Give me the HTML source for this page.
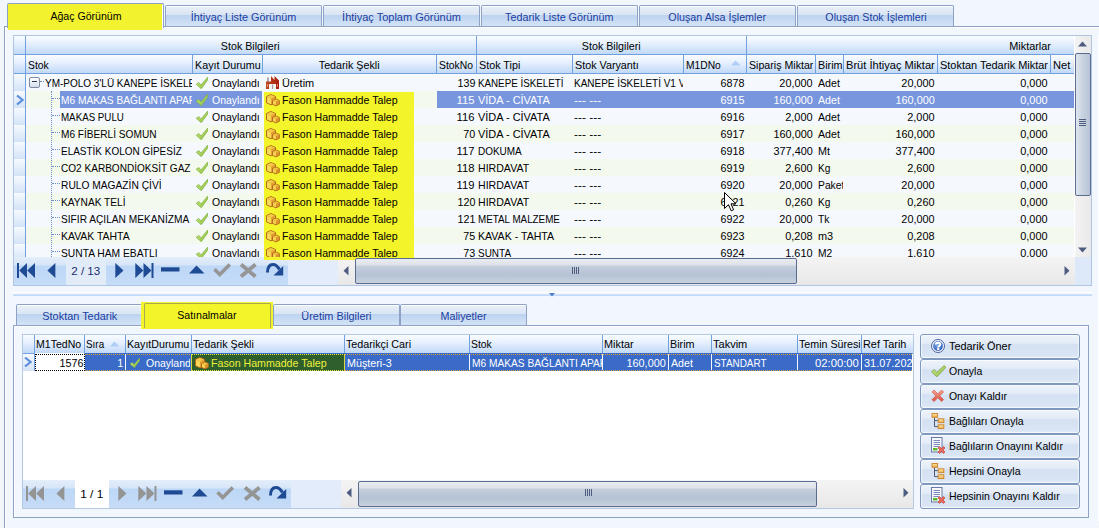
<!DOCTYPE html><html><head><meta charset="utf-8"><style>*{margin:0;padding:0}
html,body{width:1099px;height:528px;overflow:hidden}
body{position:relative;background:#F2F6FD;font-family:"Liberation Sans",sans-serif;font-size:11px}
div{position:absolute;box-sizing:content-box}
.t{white-space:pre;line-height:13px;height:13px}
svg{position:absolute}
</style></head><body>
<div style="left:4px;top:26px;width:1095px;height:502px;border-left:1px solid #8DA2C4;border-top:1px solid #8DA2C4;background:#F2F6FD"></div>
<div style="left:5px;top:27px;width:1094px;height:501px;border-left:1px solid #fff;border-top:1px solid #fff"></div>
<div style="left:165px;top:5px;width:155px;height:20px;border:1px solid #8DA2C4;border-bottom:none;border-radius:2px 2px 0 0;background:linear-gradient(#EAF0F8 0px,#D9E4F3 9px,#BCD2EF 9px,#C9DCF3 15px,#D3E3F6 20px);box-shadow:inset 0 1px 0 #fff"></div>
<div class="t" style="left:189.97px;top:11px;color:#1B3DA2;transform:scaleX(0.9857);transform-origin:50% 0;">İhtiyaç Liste Görünüm</div>
<div style="left:323px;top:5px;width:155px;height:20px;border:1px solid #8DA2C4;border-bottom:none;border-radius:2px 2px 0 0;background:linear-gradient(#EAF0F8 0px,#D9E4F3 9px,#BCD2EF 9px,#C9DCF3 15px,#D3E3F6 20px);box-shadow:inset 0 1px 0 #fff"></div>
<div class="t" style="left:341.96px;top:11px;color:#1B3DA2;transform:scaleX(0.9987);transform-origin:50% 0;">İhtiyaç Toplam Görünüm</div>
<div style="left:481px;top:5px;width:155px;height:20px;border:1px solid #8DA2C4;border-bottom:none;border-radius:2px 2px 0 0;background:linear-gradient(#EAF0F8 0px,#D9E4F3 9px,#BCD2EF 9px,#C9DCF3 15px,#D3E3F6 20px);box-shadow:inset 0 1px 0 #fff"></div>
<div class="t" style="left:504.14px;top:11px;color:#1B3DA2;transform:scaleX(0.9803);transform-origin:50% 0;">Tedarik Liste Görünüm</div>
<div style="left:639px;top:5px;width:155px;height:20px;border:1px solid #8DA2C4;border-bottom:none;border-radius:2px 2px 0 0;background:linear-gradient(#EAF0F8 0px,#D9E4F3 9px,#BCD2EF 9px,#C9DCF3 15px,#D3E3F6 20px);box-shadow:inset 0 1px 0 #fff"></div>
<div class="t" style="left:667.35px;top:11px;color:#1B3DA2;transform:scaleX(0.9737);transform-origin:50% 0;">Oluşan Alsa İşlemler</div>
<div style="left:797px;top:5px;width:155px;height:20px;border:1px solid #8DA2C4;border-bottom:none;border-radius:2px 2px 0 0;background:linear-gradient(#EAF0F8 0px,#D9E4F3 9px,#BCD2EF 9px,#C9DCF3 15px,#D3E3F6 20px);box-shadow:inset 0 1px 0 #fff"></div>
<div class="t" style="left:823.52px;top:11px;color:#1B3DA2;transform:scaleX(0.9749);transform-origin:50% 0;">Oluşan Stok İşlemleri</div>
<div style="left:7px;top:3px;width:155px;height:24px;border:1px solid #8DA2C4;border-bottom:none;border-radius:2px 2px 0 0;background:#F2F22E;box-shadow:inset -1px 0 0 #fff"></div>
<div style="left:8px;top:4px;width:154px;height:26px;background:#F2F22E"></div>
<div class="t" style="left:48.98px;top:10px;color:#000;transform:scaleX(0.9610);transform-origin:50% 0;">Ağaç Görünüm</div>
<div style="left:13px;top:35px;width:1077px;height:249px;border:1px solid #AFC5E2;background:#F5F9FE"></div>
<div style="left:14px;top:36px;width:11px;height:18px;background:linear-gradient(#FAFCFF,#E4EFFD 45%,#C1D9F8);border-right:1px solid #72A0DC;border-bottom:1px solid #72A0DC"></div>
<div style="left:14px;top:55px;width:11px;height:18px;background:linear-gradient(#FAFCFF,#E4EFFD 45%,#C1D9F8);border-right:1px solid #72A0DC;border-bottom:1px solid #72A0DC"></div>
<div style="left:26px;top:36px;width:450px;height:18px;background:linear-gradient(#FAFCFF,#E4EFFD 45%,#C1D9F8);border-bottom:1px solid #72A0DC"></div>
<div style="left:476px;top:36px;width:269px;height:18px;background:linear-gradient(#FAFCFF,#E4EFFD 45%,#C1D9F8);border-left:1px solid #72A0DC;border-bottom:1px solid #72A0DC"></div>
<div style="left:746px;top:36px;width:327px;height:18px;background:linear-gradient(#FAFCFF,#E4EFFD 45%,#C1D9F8);border-left:1px solid #72A0DC;border-bottom:1px solid #72A0DC"></div>
<div style="left:26px;top:55px;width:166px;height:18px;background:linear-gradient(#FAFCFF,#E4EFFD 45%,#C1D9F8);border-bottom:1px solid #72A0DC"></div>
<div style="left:192px;top:55px;width:69px;height:18px;background:linear-gradient(#FAFCFF,#E4EFFD 45%,#C1D9F8);border-bottom:1px solid #72A0DC;border-left:1px solid #72A0DC"></div>
<div style="left:262px;top:55px;width:173px;height:18px;background:linear-gradient(#FAFCFF,#E4EFFD 45%,#C1D9F8);border-bottom:1px solid #72A0DC;border-left:1px solid #72A0DC"></div>
<div style="left:436px;top:55px;width:39px;height:18px;background:linear-gradient(#FAFCFF,#E4EFFD 45%,#C1D9F8);border-bottom:1px solid #72A0DC;border-left:1px solid #72A0DC"></div>
<div style="left:476px;top:55px;width:95px;height:18px;background:linear-gradient(#FAFCFF,#E4EFFD 45%,#C1D9F8);border-bottom:1px solid #72A0DC;border-left:1px solid #72A0DC"></div>
<div style="left:572px;top:55px;width:110px;height:18px;background:linear-gradient(#FAFCFF,#E4EFFD 45%,#C1D9F8);border-bottom:1px solid #72A0DC;border-left:1px solid #72A0DC"></div>
<div style="left:683px;top:55px;width:62px;height:18px;background:linear-gradient(#FAFCFF,#E4EFFD 45%,#C1D9F8);border-bottom:1px solid #72A0DC;border-left:1px solid #72A0DC"></div>
<div style="left:746px;top:55px;width:68px;height:18px;background:linear-gradient(#FAFCFF,#E4EFFD 45%,#C1D9F8);border-bottom:1px solid #72A0DC;border-left:1px solid #72A0DC"></div>
<div style="left:815px;top:55px;width:27px;height:18px;background:linear-gradient(#FAFCFF,#E4EFFD 45%,#C1D9F8);border-bottom:1px solid #72A0DC;border-left:1px solid #72A0DC"></div>
<div style="left:843px;top:55px;width:93px;height:18px;background:linear-gradient(#FAFCFF,#E4EFFD 45%,#C1D9F8);border-bottom:1px solid #72A0DC;border-left:1px solid #72A0DC"></div>
<div style="left:937px;top:55px;width:112px;height:18px;background:linear-gradient(#FAFCFF,#E4EFFD 45%,#C1D9F8);border-bottom:1px solid #72A0DC;border-left:1px solid #72A0DC"></div>
<div style="left:1050px;top:55px;width:23px;height:18px;background:linear-gradient(#FAFCFF,#E4EFFD 45%,#C1D9F8);border-bottom:1px solid #72A0DC;border-left:1px solid #72A0DC"></div>
<div style="left:26px;top:74px;width:1048px;height:17px;background:#F5F9FE"></div>
<div style="left:14px;top:74px;width:11px;height:17px;background:linear-gradient(#F7FAFE,#D3E3F7 17px);border-right:1px solid #72A0DC"></div>
<div style="left:26px;top:91px;width:1048px;height:17px;background:#F4F9EE"></div>
<div style="left:14px;top:91px;width:11px;height:17px;background:linear-gradient(#F7FAFE,#D3E3F7 17px);border-right:1px solid #72A0DC"></div>
<div style="left:26px;top:108px;width:1048px;height:17px;background:#F5F9FE"></div>
<div style="left:14px;top:108px;width:11px;height:17px;background:linear-gradient(#F7FAFE,#D3E3F7 17px);border-right:1px solid #72A0DC"></div>
<div style="left:26px;top:125px;width:1048px;height:17px;background:#F4F9EE"></div>
<div style="left:14px;top:125px;width:11px;height:17px;background:linear-gradient(#F7FAFE,#D3E3F7 17px);border-right:1px solid #72A0DC"></div>
<div style="left:26px;top:142px;width:1048px;height:17px;background:#F5F9FE"></div>
<div style="left:14px;top:142px;width:11px;height:17px;background:linear-gradient(#F7FAFE,#D3E3F7 17px);border-right:1px solid #72A0DC"></div>
<div style="left:26px;top:159px;width:1048px;height:17px;background:#F4F9EE"></div>
<div style="left:14px;top:159px;width:11px;height:17px;background:linear-gradient(#F7FAFE,#D3E3F7 17px);border-right:1px solid #72A0DC"></div>
<div style="left:26px;top:176px;width:1048px;height:17px;background:#F5F9FE"></div>
<div style="left:14px;top:176px;width:11px;height:17px;background:linear-gradient(#F7FAFE,#D3E3F7 17px);border-right:1px solid #72A0DC"></div>
<div style="left:26px;top:193px;width:1048px;height:17px;background:#F4F9EE"></div>
<div style="left:14px;top:193px;width:11px;height:17px;background:linear-gradient(#F7FAFE,#D3E3F7 17px);border-right:1px solid #72A0DC"></div>
<div style="left:26px;top:210px;width:1048px;height:17px;background:#F5F9FE"></div>
<div style="left:14px;top:210px;width:11px;height:17px;background:linear-gradient(#F7FAFE,#D3E3F7 17px);border-right:1px solid #72A0DC"></div>
<div style="left:26px;top:227px;width:1048px;height:17px;background:#F4F9EE"></div>
<div style="left:14px;top:227px;width:11px;height:17px;background:linear-gradient(#F7FAFE,#D3E3F7 17px);border-right:1px solid #72A0DC"></div>
<div style="left:26px;top:244px;width:1048px;height:13px;background:#F5F9FE"></div>
<div style="left:14px;top:244px;width:11px;height:13px;background:linear-gradient(#F7FAFE,#D3E3F7 17px);border-right:1px solid #72A0DC"></div>
<div class="t" style="left:219.73px;top:40px;color:#000;transform:scaleX(0.9720);transform-origin:50% 0;">Stok Bilgileri</div>
<div class="t" style="left:580.73px;top:40px;color:#000;transform:scaleX(0.9720);transform-origin:50% 0;">Stok Bilgileri</div>
<div class="t" style="left:1008.92px;top:40px;color:#000;transform:scaleX(0.9911);transform-origin:50% 0;">Miktarlar</div>
<div style="left:26px;top:55px;width:1048px;height:18px;overflow:hidden;">
<div class="t" style="left:2px;top:4px;color:#000;transform:scaleX(0.9452);transform-origin:0 0;">Stok</div>
<div class="t" style="left:169px;top:4px;color:#000;transform:scaleX(0.9767);transform-origin:0 0;">Kayıt Durumu</div>
<div class="t" style="left:291.81px;top:4px;color:#000;transform:scaleX(0.9744);transform-origin:50% 0;">Tedarik Şekli</div>
<div class="t" style="left:413px;top:4px;color:#000;transform:scaleX(0.9412);transform-origin:0 0;">StokNo</div>
<div class="t" style="left:453px;top:4px;color:#000;transform:scaleX(0.9797);transform-origin:0 0;">Stok Tipi</div>
<div class="t" style="left:549px;top:4px;color:#000;transform:scaleX(0.9782);transform-origin:0 0;">Stok Varyantı</div>
<div class="t" style="left:660px;top:4px;color:#000;transform:scaleX(0.9340);transform-origin:0 0;">M1DNo</div>
<div class="t" style="left:723px;top:4px;color:#000;transform:scaleX(0.9664);transform-origin:0 0;">Sipariş Miktar</div>
<div class="t" style="left:792px;top:4px;color:#000;transform:scaleX(0.9813);transform-origin:0 0;">Birim</div>
<div class="t" style="left:820px;top:4px;color:#000;transform:scaleX(1.0086);transform-origin:0 0;">Brüt İhtiyaç Miktar</div>
<div class="t" style="left:914px;top:4px;color:#000;transform:scaleX(0.9940);transform-origin:0 0;">Stoktan Tedarik Miktar</div>
<div class="t" style="left:1027px;top:4px;color:#000;transform:scaleX(1.0076);transform-origin:0 0;">Net İhtiyaç</div>
</div>
<svg style="left:731px;top:60px;" width="10" height="6" viewBox="0 0 10 6"><path d="M0 5.5 L4.5 0.5 L9.5 5.5 Z" fill="#AFCDF5"/></svg>
<div style="left:264px;top:92px;width:150px;height:165px;background:#F4F42A"></div>
<div style="left:26px;top:74px;width:166px;height:17px;overflow:hidden;">
<div class="t" style="left:19px;top:3px;color:#000;transform:scaleX(0.9084);transform-origin:0 0;">YM-POLO 3&#x27;LÜ KANEPE İSKELETİ</div>
</div>
<div style="left:192px;top:74px;width:70px;height:17px;overflow:hidden;">
<svg style="left:3px;top:2px" width="13" height="13" viewBox="0 0 13 13"><defs><linearGradient id="gc" x1="0" y1="0" x2="1" y2="1"><stop offset="0" stop-color="#D2EC8C"/><stop offset="1" stop-color="#86BC3A"/></linearGradient></defs><path d="M1.2 8.3 L3.9 6.5 L6.0 9.0 L12.8 1.0 L12.4 4.4 L6.3 12.7 Z" fill="url(#gc)" stroke="#7FB03A" stroke-width="0.7" stroke-linejoin="round"/></svg>
<div class="t" style="left:20px;top:3px;color:#000;transform:scaleX(0.9521);transform-origin:0 0;">Onaylandı</div>
</div>
<div style="left:264px;top:74px;width:172px;height:17px;overflow:hidden;">
<svg style="left:2px;top:2px;" width="14" height="14" viewBox="0 0 14 14"><defs><linearGradient id="gf" x1="0" y1="0" x2="1" y2="0"><stop offset="0" stop-color="#C24A1E"/><stop offset="1" stop-color="#A81C0E"/></linearGradient></defs><rect x="1.2" y="1.5" width="1.6" height="5" fill="#9A9A9A"/><path d="M0 5.5 L5 5.5 L5 0 L8.5 4 L8.5 0 L13 4.5 L13 13 L10 13 L10 8 L3 8 L3 13 L0 13 Z" fill="url(#gf)"/><rect x="3" y="8" width="7" height="5" fill="#F4F4F4"/><rect x="6" y="8.5" width="1.2" height="4.5" fill="#A0A0A0"/><rect x="1.2" y="8.5" width="0.8" height="2" fill="#F0D0C0"/><rect x="11" y="8.5" width="0.8" height="2" fill="#F0D0C0"/></svg>
<div class="t" style="left:18px;top:3px;color:#000;transform:scaleX(0.9929);transform-origin:0 0;">Üretim</div>
</div>
<div style="left:437px;top:74px;width:638px;height:17px;overflow:hidden;">
<div class="t" style="left:19.62px;top:3px;color:#000;transform:scaleX(0.9769);transform-origin:100% 0;">139</div>
<div class="t" style="left:41px;top:3px;color:#000;transform:scaleX(0.8894);transform-origin:0 0;">KANEPE İSKELETİ</div>
<div class="t" style="left:282.50px;top:3px;color:#000;transform:scaleX(0.9769);transform-origin:100% 0;">6878</div>
<div class="t" style="left:342.31px;top:3px;color:#000;transform:scaleX(0.9901);transform-origin:100% 0;">20,000</div>
</div>
<div style="left:815px;top:74px;width:28px;height:17px;overflow:hidden;">
<div class="t" style="left:3px;top:3px;color:#000;transform:scaleX(0.9670);transform-origin:0 0;">Adet</div>
</div>
<div style="left:572px;top:74px;width:111px;height:17px;overflow:hidden;">
<div class="t" style="left:2px;top:3px;color:#000;transform:scaleX(0.9058);transform-origin:0 0;">KANEPE İSKELETİ V1 V</div>
</div>
<div style="left:437px;top:74px;width:638px;height:17px;overflow:hidden;">
<div class="t" style="left:464.31px;top:3px;color:#000;transform:scaleX(0.9901);transform-origin:100% 0;">20,000</div>
<div class="t" style="left:583.44px;top:3px;color:#000;transform:scaleX(0.9931);transform-origin:100% 0;">0,000</div>
</div>
<div style="left:60px;top:91px;width:202px;height:17px;background:#7896DE"></div>
<div style="left:437px;top:91px;width:637px;height:17px;background:#7896DE"></div>
<div style="left:26px;top:91px;width:166px;height:17px;overflow:hidden;">
<div class="t" style="left:35px;top:3px;color:#fff;transform:scaleX(0.9264);transform-origin:0 0;">M6 MAKAS BAĞLANTI APARATI</div>
</div>
<div style="left:192px;top:91px;width:70px;height:17px;overflow:hidden;">
<svg style="left:3px;top:2px" width="13" height="13" viewBox="0 0 13 13"><defs><linearGradient id="gc" x1="0" y1="0" x2="1" y2="1"><stop offset="0" stop-color="#D2EC8C"/><stop offset="1" stop-color="#86BC3A"/></linearGradient></defs><path d="M1.2 8.3 L3.9 6.5 L6.0 9.0 L12.8 1.0 L12.4 4.4 L6.3 12.7 Z" fill="url(#gc)" stroke="#7FB03A" stroke-width="0.7" stroke-linejoin="round"/></svg>
<div class="t" style="left:20px;top:3px;color:#fff;transform:scaleX(0.9521);transform-origin:0 0;">Onaylandı</div>
</div>
<div style="left:264px;top:91px;width:172px;height:17px;overflow:hidden;">
<svg style="left:2px;top:3px;" width="14" height="13" viewBox="0 0 14 13"><path d="M0.5 2.5 L4.8 0.5 L9.5 2.5 L9.5 8.8 L5 10.8 L0.5 8.8 Z" fill="#E8A838" stroke="#B06A1A" stroke-width="1" stroke-linejoin="round"/><path d="M1 2.9 L5 4.6 L5 10.2 L1 8.5 Z" fill="#F8D858"/><path d="M1 2.6 L4.8 1 L9 2.6 L5 4.3 Z" fill="#F4CC48"/><path d="M5.2 4.6 L9 2.9 L9 8.5 L5.2 10.2 Z" fill="#E2A232"/><path d="M6.5 6.5 L9.8 5 L13.3 6.5 L13.3 10.3 L9.8 11.8 L6.5 10.3 Z" fill="#E8A838" stroke="#B06A1A" stroke-width="1" stroke-linejoin="round"/><path d="M7 6.9 L9.8 8.1 L9.8 11.2 L7 10 Z" fill="#F8D454"/><path d="M7 6.6 L9.8 5.5 L12.8 6.6 L9.8 7.9 Z" fill="#F2C440"/><path d="M10 8.1 L12.8 6.9 L12.8 10 L10 11.2 Z" fill="#D8922A"/></svg>
<div class="t" style="left:18px;top:3px;color:#000;transform:scaleX(0.9661);transform-origin:0 0;">Fason Hammadde Talep</div>
</div>
<div style="left:437px;top:91px;width:638px;height:17px;overflow:hidden;">
<div class="t" style="left:20.44px;top:3px;color:#fff;transform:scaleX(1.0221);transform-origin:100% 0;">115</div>
<div class="t" style="left:41px;top:3px;color:#fff;transform:scaleX(0.9941);transform-origin:0 0;">VİDA - CİVATA</div>
<div class="t" style="left:282.50px;top:3px;color:#fff;transform:scaleX(0.9769);transform-origin:100% 0;">6915</div>
<div class="t" style="left:336.19px;top:3px;color:#fff;transform:scaleX(0.9881);transform-origin:100% 0;">160,000</div>
</div>
<div style="left:815px;top:91px;width:28px;height:17px;overflow:hidden;">
<div class="t" style="left:3px;top:3px;color:#fff;transform:scaleX(0.9670);transform-origin:0 0;">Adet</div>
</div>
<div style="left:572px;top:91px;width:111px;height:17px;overflow:hidden;">
<div class="t" style="left:2px;top:3px;color:#fff;transform:scaleX(1.0901);transform-origin:0 0;">--- ---</div>
</div>
<div style="left:437px;top:91px;width:638px;height:17px;overflow:hidden;">
<div class="t" style="left:458.19px;top:3px;color:#fff;transform:scaleX(0.9881);transform-origin:100% 0;">160,000</div>
<div class="t" style="left:583.44px;top:3px;color:#fff;transform:scaleX(0.9931);transform-origin:100% 0;">0,000</div>
</div>
<div style="left:26px;top:108px;width:166px;height:17px;overflow:hidden;">
<div class="t" style="left:35px;top:3px;color:#000;transform:scaleX(0.8864);transform-origin:0 0;">MAKAS PULU</div>
</div>
<div style="left:192px;top:108px;width:70px;height:17px;overflow:hidden;">
<svg style="left:3px;top:2px" width="13" height="13" viewBox="0 0 13 13"><defs><linearGradient id="gc" x1="0" y1="0" x2="1" y2="1"><stop offset="0" stop-color="#D2EC8C"/><stop offset="1" stop-color="#86BC3A"/></linearGradient></defs><path d="M1.2 8.3 L3.9 6.5 L6.0 9.0 L12.8 1.0 L12.4 4.4 L6.3 12.7 Z" fill="url(#gc)" stroke="#7FB03A" stroke-width="0.7" stroke-linejoin="round"/></svg>
<div class="t" style="left:20px;top:3px;color:#000;transform:scaleX(0.9521);transform-origin:0 0;">Onaylandı</div>
</div>
<div style="left:264px;top:108px;width:172px;height:17px;overflow:hidden;">
<svg style="left:2px;top:3px;" width="14" height="13" viewBox="0 0 14 13"><path d="M0.5 2.5 L4.8 0.5 L9.5 2.5 L9.5 8.8 L5 10.8 L0.5 8.8 Z" fill="#E8A838" stroke="#B06A1A" stroke-width="1" stroke-linejoin="round"/><path d="M1 2.9 L5 4.6 L5 10.2 L1 8.5 Z" fill="#F8D858"/><path d="M1 2.6 L4.8 1 L9 2.6 L5 4.3 Z" fill="#F4CC48"/><path d="M5.2 4.6 L9 2.9 L9 8.5 L5.2 10.2 Z" fill="#E2A232"/><path d="M6.5 6.5 L9.8 5 L13.3 6.5 L13.3 10.3 L9.8 11.8 L6.5 10.3 Z" fill="#E8A838" stroke="#B06A1A" stroke-width="1" stroke-linejoin="round"/><path d="M7 6.9 L9.8 8.1 L9.8 11.2 L7 10 Z" fill="#F8D454"/><path d="M7 6.6 L9.8 5.5 L12.8 6.6 L9.8 7.9 Z" fill="#F2C440"/><path d="M10 8.1 L12.8 6.9 L12.8 10 L10 11.2 Z" fill="#D8922A"/></svg>
<div class="t" style="left:18px;top:3px;color:#000;transform:scaleX(0.9661);transform-origin:0 0;">Fason Hammadde Talep</div>
</div>
<div style="left:437px;top:108px;width:638px;height:17px;overflow:hidden;">
<div class="t" style="left:20.44px;top:3px;color:#000;transform:scaleX(1.0221);transform-origin:100% 0;">116</div>
<div class="t" style="left:41px;top:3px;color:#000;transform:scaleX(0.9941);transform-origin:0 0;">VİDA - CİVATA</div>
<div class="t" style="left:282.50px;top:3px;color:#000;transform:scaleX(0.9769);transform-origin:100% 0;">6916</div>
<div class="t" style="left:348.44px;top:3px;color:#000;transform:scaleX(0.9931);transform-origin:100% 0;">2,000</div>
</div>
<div style="left:815px;top:108px;width:28px;height:17px;overflow:hidden;">
<div class="t" style="left:3px;top:3px;color:#000;transform:scaleX(0.9670);transform-origin:0 0;">Adet</div>
</div>
<div style="left:572px;top:108px;width:111px;height:17px;overflow:hidden;">
<div class="t" style="left:2px;top:3px;color:#000;transform:scaleX(1.0901);transform-origin:0 0;">--- ---</div>
</div>
<div style="left:437px;top:108px;width:638px;height:17px;overflow:hidden;">
<div class="t" style="left:470.44px;top:3px;color:#000;transform:scaleX(0.9931);transform-origin:100% 0;">2,000</div>
<div class="t" style="left:583.44px;top:3px;color:#000;transform:scaleX(0.9931);transform-origin:100% 0;">0,000</div>
</div>
<div style="left:26px;top:125px;width:166px;height:17px;overflow:hidden;">
<div class="t" style="left:35px;top:3px;color:#000;transform:scaleX(0.9189);transform-origin:0 0;">M6 FİBERLİ SOMUN</div>
</div>
<div style="left:192px;top:125px;width:70px;height:17px;overflow:hidden;">
<svg style="left:3px;top:2px" width="13" height="13" viewBox="0 0 13 13"><defs><linearGradient id="gc" x1="0" y1="0" x2="1" y2="1"><stop offset="0" stop-color="#D2EC8C"/><stop offset="1" stop-color="#86BC3A"/></linearGradient></defs><path d="M1.2 8.3 L3.9 6.5 L6.0 9.0 L12.8 1.0 L12.4 4.4 L6.3 12.7 Z" fill="url(#gc)" stroke="#7FB03A" stroke-width="0.7" stroke-linejoin="round"/></svg>
<div class="t" style="left:20px;top:3px;color:#000;transform:scaleX(0.9521);transform-origin:0 0;">Onaylandı</div>
</div>
<div style="left:264px;top:125px;width:172px;height:17px;overflow:hidden;">
<svg style="left:2px;top:3px;" width="14" height="13" viewBox="0 0 14 13"><path d="M0.5 2.5 L4.8 0.5 L9.5 2.5 L9.5 8.8 L5 10.8 L0.5 8.8 Z" fill="#E8A838" stroke="#B06A1A" stroke-width="1" stroke-linejoin="round"/><path d="M1 2.9 L5 4.6 L5 10.2 L1 8.5 Z" fill="#F8D858"/><path d="M1 2.6 L4.8 1 L9 2.6 L5 4.3 Z" fill="#F4CC48"/><path d="M5.2 4.6 L9 2.9 L9 8.5 L5.2 10.2 Z" fill="#E2A232"/><path d="M6.5 6.5 L9.8 5 L13.3 6.5 L13.3 10.3 L9.8 11.8 L6.5 10.3 Z" fill="#E8A838" stroke="#B06A1A" stroke-width="1" stroke-linejoin="round"/><path d="M7 6.9 L9.8 8.1 L9.8 11.2 L7 10 Z" fill="#F8D454"/><path d="M7 6.6 L9.8 5.5 L12.8 6.6 L9.8 7.9 Z" fill="#F2C440"/><path d="M10 8.1 L12.8 6.9 L12.8 10 L10 11.2 Z" fill="#D8922A"/></svg>
<div class="t" style="left:18px;top:3px;color:#000;transform:scaleX(0.9661);transform-origin:0 0;">Fason Hammadde Talep</div>
</div>
<div style="left:437px;top:125px;width:638px;height:17px;overflow:hidden;">
<div class="t" style="left:25.75px;top:3px;color:#000;transform:scaleX(0.9769);transform-origin:100% 0;">70</div>
<div class="t" style="left:41px;top:3px;color:#000;transform:scaleX(0.9941);transform-origin:0 0;">VİDA - CİVATA</div>
<div class="t" style="left:282.50px;top:3px;color:#000;transform:scaleX(0.9769);transform-origin:100% 0;">6917</div>
<div class="t" style="left:336.19px;top:3px;color:#000;transform:scaleX(0.9881);transform-origin:100% 0;">160,000</div>
</div>
<div style="left:815px;top:125px;width:28px;height:17px;overflow:hidden;">
<div class="t" style="left:3px;top:3px;color:#000;transform:scaleX(0.9670);transform-origin:0 0;">Adet</div>
</div>
<div style="left:572px;top:125px;width:111px;height:17px;overflow:hidden;">
<div class="t" style="left:2px;top:3px;color:#000;transform:scaleX(1.0901);transform-origin:0 0;">--- ---</div>
</div>
<div style="left:437px;top:125px;width:638px;height:17px;overflow:hidden;">
<div class="t" style="left:458.19px;top:3px;color:#000;transform:scaleX(0.9881);transform-origin:100% 0;">160,000</div>
<div class="t" style="left:583.44px;top:3px;color:#000;transform:scaleX(0.9931);transform-origin:100% 0;">0,000</div>
</div>
<div style="left:26px;top:142px;width:166px;height:17px;overflow:hidden;">
<div class="t" style="left:35px;top:3px;color:#000;transform:scaleX(0.9062);transform-origin:0 0;">ELASTİK KOLON GİPESİZ</div>
</div>
<div style="left:192px;top:142px;width:70px;height:17px;overflow:hidden;">
<svg style="left:3px;top:2px" width="13" height="13" viewBox="0 0 13 13"><defs><linearGradient id="gc" x1="0" y1="0" x2="1" y2="1"><stop offset="0" stop-color="#D2EC8C"/><stop offset="1" stop-color="#86BC3A"/></linearGradient></defs><path d="M1.2 8.3 L3.9 6.5 L6.0 9.0 L12.8 1.0 L12.4 4.4 L6.3 12.7 Z" fill="url(#gc)" stroke="#7FB03A" stroke-width="0.7" stroke-linejoin="round"/></svg>
<div class="t" style="left:20px;top:3px;color:#000;transform:scaleX(0.9521);transform-origin:0 0;">Onaylandı</div>
</div>
<div style="left:264px;top:142px;width:172px;height:17px;overflow:hidden;">
<svg style="left:2px;top:3px;" width="14" height="13" viewBox="0 0 14 13"><path d="M0.5 2.5 L4.8 0.5 L9.5 2.5 L9.5 8.8 L5 10.8 L0.5 8.8 Z" fill="#E8A838" stroke="#B06A1A" stroke-width="1" stroke-linejoin="round"/><path d="M1 2.9 L5 4.6 L5 10.2 L1 8.5 Z" fill="#F8D858"/><path d="M1 2.6 L4.8 1 L9 2.6 L5 4.3 Z" fill="#F4CC48"/><path d="M5.2 4.6 L9 2.9 L9 8.5 L5.2 10.2 Z" fill="#E2A232"/><path d="M6.5 6.5 L9.8 5 L13.3 6.5 L13.3 10.3 L9.8 11.8 L6.5 10.3 Z" fill="#E8A838" stroke="#B06A1A" stroke-width="1" stroke-linejoin="round"/><path d="M7 6.9 L9.8 8.1 L9.8 11.2 L7 10 Z" fill="#F8D454"/><path d="M7 6.6 L9.8 5.5 L12.8 6.6 L9.8 7.9 Z" fill="#F2C440"/><path d="M10 8.1 L12.8 6.9 L12.8 10 L10 11.2 Z" fill="#D8922A"/></svg>
<div class="t" style="left:18px;top:3px;color:#000;transform:scaleX(0.9661);transform-origin:0 0;">Fason Hammadde Talep</div>
</div>
<div style="left:437px;top:142px;width:638px;height:17px;overflow:hidden;">
<div class="t" style="left:20.44px;top:3px;color:#000;transform:scaleX(1.0221);transform-origin:100% 0;">117</div>
<div class="t" style="left:41px;top:3px;color:#000;transform:scaleX(0.9061);transform-origin:0 0;">DOKUMA</div>
<div class="t" style="left:282.50px;top:3px;color:#000;transform:scaleX(0.9769);transform-origin:100% 0;">6918</div>
<div class="t" style="left:336.19px;top:3px;color:#000;transform:scaleX(0.9881);transform-origin:100% 0;">377,400</div>
</div>
<div style="left:815px;top:142px;width:28px;height:17px;overflow:hidden;">
<div class="t" style="left:3px;top:3px;color:#000;transform:scaleX(0.9763);transform-origin:0 0;">Mt</div>
</div>
<div style="left:572px;top:142px;width:111px;height:17px;overflow:hidden;">
<div class="t" style="left:2px;top:3px;color:#000;transform:scaleX(1.0901);transform-origin:0 0;">--- ---</div>
</div>
<div style="left:437px;top:142px;width:638px;height:17px;overflow:hidden;">
<div class="t" style="left:458.19px;top:3px;color:#000;transform:scaleX(0.9881);transform-origin:100% 0;">377,400</div>
<div class="t" style="left:583.44px;top:3px;color:#000;transform:scaleX(0.9931);transform-origin:100% 0;">0,000</div>
</div>
<div style="left:26px;top:159px;width:166px;height:17px;overflow:hidden;">
<div class="t" style="left:35px;top:3px;color:#000;transform:scaleX(0.9145);transform-origin:0 0;">CO2 KARBONDİOKSİT GAZ</div>
</div>
<div style="left:192px;top:159px;width:70px;height:17px;overflow:hidden;">
<svg style="left:3px;top:2px" width="13" height="13" viewBox="0 0 13 13"><defs><linearGradient id="gc" x1="0" y1="0" x2="1" y2="1"><stop offset="0" stop-color="#D2EC8C"/><stop offset="1" stop-color="#86BC3A"/></linearGradient></defs><path d="M1.2 8.3 L3.9 6.5 L6.0 9.0 L12.8 1.0 L12.4 4.4 L6.3 12.7 Z" fill="url(#gc)" stroke="#7FB03A" stroke-width="0.7" stroke-linejoin="round"/></svg>
<div class="t" style="left:20px;top:3px;color:#000;transform:scaleX(0.9521);transform-origin:0 0;">Onaylandı</div>
</div>
<div style="left:264px;top:159px;width:172px;height:17px;overflow:hidden;">
<svg style="left:2px;top:3px;" width="14" height="13" viewBox="0 0 14 13"><path d="M0.5 2.5 L4.8 0.5 L9.5 2.5 L9.5 8.8 L5 10.8 L0.5 8.8 Z" fill="#E8A838" stroke="#B06A1A" stroke-width="1" stroke-linejoin="round"/><path d="M1 2.9 L5 4.6 L5 10.2 L1 8.5 Z" fill="#F8D858"/><path d="M1 2.6 L4.8 1 L9 2.6 L5 4.3 Z" fill="#F4CC48"/><path d="M5.2 4.6 L9 2.9 L9 8.5 L5.2 10.2 Z" fill="#E2A232"/><path d="M6.5 6.5 L9.8 5 L13.3 6.5 L13.3 10.3 L9.8 11.8 L6.5 10.3 Z" fill="#E8A838" stroke="#B06A1A" stroke-width="1" stroke-linejoin="round"/><path d="M7 6.9 L9.8 8.1 L9.8 11.2 L7 10 Z" fill="#F8D454"/><path d="M7 6.6 L9.8 5.5 L12.8 6.6 L9.8 7.9 Z" fill="#F2C440"/><path d="M10 8.1 L12.8 6.9 L12.8 10 L10 11.2 Z" fill="#D8922A"/></svg>
<div class="t" style="left:18px;top:3px;color:#000;transform:scaleX(0.9661);transform-origin:0 0;">Fason Hammadde Talep</div>
</div>
<div style="left:437px;top:159px;width:638px;height:17px;overflow:hidden;">
<div class="t" style="left:20.44px;top:3px;color:#000;transform:scaleX(1.0221);transform-origin:100% 0;">118</div>
<div class="t" style="left:41px;top:3px;color:#000;transform:scaleX(0.9616);transform-origin:0 0;">HIRDAVAT</div>
<div class="t" style="left:282.50px;top:3px;color:#000;transform:scaleX(0.9769);transform-origin:100% 0;">6919</div>
<div class="t" style="left:348.44px;top:3px;color:#000;transform:scaleX(0.9931);transform-origin:100% 0;">2,600</div>
</div>
<div style="left:815px;top:159px;width:28px;height:17px;overflow:hidden;">
<div class="t" style="left:3px;top:3px;color:#000;transform:scaleX(0.9196);transform-origin:0 0;">Kg</div>
</div>
<div style="left:572px;top:159px;width:111px;height:17px;overflow:hidden;">
<div class="t" style="left:2px;top:3px;color:#000;transform:scaleX(1.0901);transform-origin:0 0;">--- ---</div>
</div>
<div style="left:437px;top:159px;width:638px;height:17px;overflow:hidden;">
<div class="t" style="left:470.44px;top:3px;color:#000;transform:scaleX(0.9931);transform-origin:100% 0;">2,600</div>
<div class="t" style="left:583.44px;top:3px;color:#000;transform:scaleX(0.9931);transform-origin:100% 0;">0,000</div>
</div>
<div style="left:26px;top:176px;width:166px;height:17px;overflow:hidden;">
<div class="t" style="left:35px;top:3px;color:#000;transform:scaleX(0.9294);transform-origin:0 0;">RULO MAGAZİN ÇİVİ</div>
</div>
<div style="left:192px;top:176px;width:70px;height:17px;overflow:hidden;">
<svg style="left:3px;top:2px" width="13" height="13" viewBox="0 0 13 13"><defs><linearGradient id="gc" x1="0" y1="0" x2="1" y2="1"><stop offset="0" stop-color="#D2EC8C"/><stop offset="1" stop-color="#86BC3A"/></linearGradient></defs><path d="M1.2 8.3 L3.9 6.5 L6.0 9.0 L12.8 1.0 L12.4 4.4 L6.3 12.7 Z" fill="url(#gc)" stroke="#7FB03A" stroke-width="0.7" stroke-linejoin="round"/></svg>
<div class="t" style="left:20px;top:3px;color:#000;transform:scaleX(0.9521);transform-origin:0 0;">Onaylandı</div>
</div>
<div style="left:264px;top:176px;width:172px;height:17px;overflow:hidden;">
<svg style="left:2px;top:3px;" width="14" height="13" viewBox="0 0 14 13"><path d="M0.5 2.5 L4.8 0.5 L9.5 2.5 L9.5 8.8 L5 10.8 L0.5 8.8 Z" fill="#E8A838" stroke="#B06A1A" stroke-width="1" stroke-linejoin="round"/><path d="M1 2.9 L5 4.6 L5 10.2 L1 8.5 Z" fill="#F8D858"/><path d="M1 2.6 L4.8 1 L9 2.6 L5 4.3 Z" fill="#F4CC48"/><path d="M5.2 4.6 L9 2.9 L9 8.5 L5.2 10.2 Z" fill="#E2A232"/><path d="M6.5 6.5 L9.8 5 L13.3 6.5 L13.3 10.3 L9.8 11.8 L6.5 10.3 Z" fill="#E8A838" stroke="#B06A1A" stroke-width="1" stroke-linejoin="round"/><path d="M7 6.9 L9.8 8.1 L9.8 11.2 L7 10 Z" fill="#F8D454"/><path d="M7 6.6 L9.8 5.5 L12.8 6.6 L9.8 7.9 Z" fill="#F2C440"/><path d="M10 8.1 L12.8 6.9 L12.8 10 L10 11.2 Z" fill="#D8922A"/></svg>
<div class="t" style="left:18px;top:3px;color:#000;transform:scaleX(0.9661);transform-origin:0 0;">Fason Hammadde Talep</div>
</div>
<div style="left:437px;top:176px;width:638px;height:17px;overflow:hidden;">
<div class="t" style="left:20.44px;top:3px;color:#000;transform:scaleX(1.0221);transform-origin:100% 0;">119</div>
<div class="t" style="left:41px;top:3px;color:#000;transform:scaleX(0.9616);transform-origin:0 0;">HIRDAVAT</div>
<div class="t" style="left:282.50px;top:3px;color:#000;transform:scaleX(0.9769);transform-origin:100% 0;">6920</div>
<div class="t" style="left:342.31px;top:3px;color:#000;transform:scaleX(0.9901);transform-origin:100% 0;">20,000</div>
</div>
<div style="left:815px;top:176px;width:28px;height:17px;overflow:hidden;">
<div class="t" style="left:3px;top:3px;color:#000;transform:scaleX(0.9374);transform-origin:0 0;">Paket</div>
</div>
<div style="left:572px;top:176px;width:111px;height:17px;overflow:hidden;">
<div class="t" style="left:2px;top:3px;color:#000;transform:scaleX(1.0901);transform-origin:0 0;">--- ---</div>
</div>
<div style="left:437px;top:176px;width:638px;height:17px;overflow:hidden;">
<div class="t" style="left:464.31px;top:3px;color:#000;transform:scaleX(0.9901);transform-origin:100% 0;">20,000</div>
<div class="t" style="left:583.44px;top:3px;color:#000;transform:scaleX(0.9931);transform-origin:100% 0;">0,000</div>
</div>
<div style="left:26px;top:193px;width:166px;height:17px;overflow:hidden;">
<div class="t" style="left:35px;top:3px;color:#000;transform:scaleX(0.9226);transform-origin:0 0;">KAYNAK TELİ</div>
</div>
<div style="left:192px;top:193px;width:70px;height:17px;overflow:hidden;">
<svg style="left:3px;top:2px" width="13" height="13" viewBox="0 0 13 13"><defs><linearGradient id="gc" x1="0" y1="0" x2="1" y2="1"><stop offset="0" stop-color="#D2EC8C"/><stop offset="1" stop-color="#86BC3A"/></linearGradient></defs><path d="M1.2 8.3 L3.9 6.5 L6.0 9.0 L12.8 1.0 L12.4 4.4 L6.3 12.7 Z" fill="url(#gc)" stroke="#7FB03A" stroke-width="0.7" stroke-linejoin="round"/></svg>
<div class="t" style="left:20px;top:3px;color:#000;transform:scaleX(0.9521);transform-origin:0 0;">Onaylandı</div>
</div>
<div style="left:264px;top:193px;width:172px;height:17px;overflow:hidden;">
<svg style="left:2px;top:3px;" width="14" height="13" viewBox="0 0 14 13"><path d="M0.5 2.5 L4.8 0.5 L9.5 2.5 L9.5 8.8 L5 10.8 L0.5 8.8 Z" fill="#E8A838" stroke="#B06A1A" stroke-width="1" stroke-linejoin="round"/><path d="M1 2.9 L5 4.6 L5 10.2 L1 8.5 Z" fill="#F8D858"/><path d="M1 2.6 L4.8 1 L9 2.6 L5 4.3 Z" fill="#F4CC48"/><path d="M5.2 4.6 L9 2.9 L9 8.5 L5.2 10.2 Z" fill="#E2A232"/><path d="M6.5 6.5 L9.8 5 L13.3 6.5 L13.3 10.3 L9.8 11.8 L6.5 10.3 Z" fill="#E8A838" stroke="#B06A1A" stroke-width="1" stroke-linejoin="round"/><path d="M7 6.9 L9.8 8.1 L9.8 11.2 L7 10 Z" fill="#F8D454"/><path d="M7 6.6 L9.8 5.5 L12.8 6.6 L9.8 7.9 Z" fill="#F2C440"/><path d="M10 8.1 L12.8 6.9 L12.8 10 L10 11.2 Z" fill="#D8922A"/></svg>
<div class="t" style="left:18px;top:3px;color:#000;transform:scaleX(0.9661);transform-origin:0 0;">Fason Hammadde Talep</div>
</div>
<div style="left:437px;top:193px;width:638px;height:17px;overflow:hidden;">
<div class="t" style="left:19.62px;top:3px;color:#000;transform:scaleX(0.9769);transform-origin:100% 0;">120</div>
<div class="t" style="left:41px;top:3px;color:#000;transform:scaleX(0.9616);transform-origin:0 0;">HIRDAVAT</div>
<div class="t" style="left:282.50px;top:3px;color:#000;transform:scaleX(0.9769);transform-origin:100% 0;">6921</div>
<div class="t" style="left:348.44px;top:3px;color:#000;transform:scaleX(0.9931);transform-origin:100% 0;">0,260</div>
</div>
<div style="left:815px;top:193px;width:28px;height:17px;overflow:hidden;">
<div class="t" style="left:3px;top:3px;color:#000;transform:scaleX(0.9196);transform-origin:0 0;">Kg</div>
</div>
<div style="left:572px;top:193px;width:111px;height:17px;overflow:hidden;">
<div class="t" style="left:2px;top:3px;color:#000;transform:scaleX(1.0901);transform-origin:0 0;">--- ---</div>
</div>
<div style="left:437px;top:193px;width:638px;height:17px;overflow:hidden;">
<div class="t" style="left:470.44px;top:3px;color:#000;transform:scaleX(0.9931);transform-origin:100% 0;">0,260</div>
<div class="t" style="left:583.44px;top:3px;color:#000;transform:scaleX(0.9931);transform-origin:100% 0;">0,000</div>
</div>
<div style="left:26px;top:210px;width:166px;height:17px;overflow:hidden;">
<div class="t" style="left:35px;top:3px;color:#000;transform:scaleX(0.9241);transform-origin:0 0;">SIFIR AÇILAN MEKANİZMA</div>
</div>
<div style="left:192px;top:210px;width:70px;height:17px;overflow:hidden;">
<svg style="left:3px;top:2px" width="13" height="13" viewBox="0 0 13 13"><defs><linearGradient id="gc" x1="0" y1="0" x2="1" y2="1"><stop offset="0" stop-color="#D2EC8C"/><stop offset="1" stop-color="#86BC3A"/></linearGradient></defs><path d="M1.2 8.3 L3.9 6.5 L6.0 9.0 L12.8 1.0 L12.4 4.4 L6.3 12.7 Z" fill="url(#gc)" stroke="#7FB03A" stroke-width="0.7" stroke-linejoin="round"/></svg>
<div class="t" style="left:20px;top:3px;color:#000;transform:scaleX(0.9521);transform-origin:0 0;">Onaylandı</div>
</div>
<div style="left:264px;top:210px;width:172px;height:17px;overflow:hidden;">
<svg style="left:2px;top:3px;" width="14" height="13" viewBox="0 0 14 13"><path d="M0.5 2.5 L4.8 0.5 L9.5 2.5 L9.5 8.8 L5 10.8 L0.5 8.8 Z" fill="#E8A838" stroke="#B06A1A" stroke-width="1" stroke-linejoin="round"/><path d="M1 2.9 L5 4.6 L5 10.2 L1 8.5 Z" fill="#F8D858"/><path d="M1 2.6 L4.8 1 L9 2.6 L5 4.3 Z" fill="#F4CC48"/><path d="M5.2 4.6 L9 2.9 L9 8.5 L5.2 10.2 Z" fill="#E2A232"/><path d="M6.5 6.5 L9.8 5 L13.3 6.5 L13.3 10.3 L9.8 11.8 L6.5 10.3 Z" fill="#E8A838" stroke="#B06A1A" stroke-width="1" stroke-linejoin="round"/><path d="M7 6.9 L9.8 8.1 L9.8 11.2 L7 10 Z" fill="#F8D454"/><path d="M7 6.6 L9.8 5.5 L12.8 6.6 L9.8 7.9 Z" fill="#F2C440"/><path d="M10 8.1 L12.8 6.9 L12.8 10 L10 11.2 Z" fill="#D8922A"/></svg>
<div class="t" style="left:18px;top:3px;color:#000;transform:scaleX(0.9661);transform-origin:0 0;">Fason Hammadde Talep</div>
</div>
<div style="left:437px;top:210px;width:638px;height:17px;overflow:hidden;">
<div class="t" style="left:19.62px;top:3px;color:#000;transform:scaleX(0.9769);transform-origin:100% 0;">121</div>
<div class="t" style="left:41px;top:3px;color:#000;transform:scaleX(0.8934);transform-origin:0 0;">METAL MALZEME</div>
<div class="t" style="left:282.50px;top:3px;color:#000;transform:scaleX(0.9769);transform-origin:100% 0;">6922</div>
<div class="t" style="left:342.31px;top:3px;color:#000;transform:scaleX(0.9901);transform-origin:100% 0;">20,000</div>
</div>
<div style="left:815px;top:210px;width:28px;height:17px;overflow:hidden;">
<div class="t" style="left:3px;top:3px;color:#000;transform:scaleX(0.9394);transform-origin:0 0;">Tk</div>
</div>
<div style="left:572px;top:210px;width:111px;height:17px;overflow:hidden;">
<div class="t" style="left:2px;top:3px;color:#000;transform:scaleX(1.0901);transform-origin:0 0;">--- ---</div>
</div>
<div style="left:437px;top:210px;width:638px;height:17px;overflow:hidden;">
<div class="t" style="left:464.31px;top:3px;color:#000;transform:scaleX(0.9901);transform-origin:100% 0;">20,000</div>
<div class="t" style="left:583.44px;top:3px;color:#000;transform:scaleX(0.9931);transform-origin:100% 0;">0,000</div>
</div>
<div style="left:26px;top:227px;width:166px;height:17px;overflow:hidden;">
<div class="t" style="left:35px;top:3px;color:#000;transform:scaleX(0.9496);transform-origin:0 0;">KAVAK TAHTA</div>
</div>
<div style="left:192px;top:227px;width:70px;height:17px;overflow:hidden;">
<svg style="left:3px;top:2px" width="13" height="13" viewBox="0 0 13 13"><defs><linearGradient id="gc" x1="0" y1="0" x2="1" y2="1"><stop offset="0" stop-color="#D2EC8C"/><stop offset="1" stop-color="#86BC3A"/></linearGradient></defs><path d="M1.2 8.3 L3.9 6.5 L6.0 9.0 L12.8 1.0 L12.4 4.4 L6.3 12.7 Z" fill="url(#gc)" stroke="#7FB03A" stroke-width="0.7" stroke-linejoin="round"/></svg>
<div class="t" style="left:20px;top:3px;color:#000;transform:scaleX(0.9521);transform-origin:0 0;">Onaylandı</div>
</div>
<div style="left:264px;top:227px;width:172px;height:17px;overflow:hidden;">
<svg style="left:2px;top:3px;" width="14" height="13" viewBox="0 0 14 13"><path d="M0.5 2.5 L4.8 0.5 L9.5 2.5 L9.5 8.8 L5 10.8 L0.5 8.8 Z" fill="#E8A838" stroke="#B06A1A" stroke-width="1" stroke-linejoin="round"/><path d="M1 2.9 L5 4.6 L5 10.2 L1 8.5 Z" fill="#F8D858"/><path d="M1 2.6 L4.8 1 L9 2.6 L5 4.3 Z" fill="#F4CC48"/><path d="M5.2 4.6 L9 2.9 L9 8.5 L5.2 10.2 Z" fill="#E2A232"/><path d="M6.5 6.5 L9.8 5 L13.3 6.5 L13.3 10.3 L9.8 11.8 L6.5 10.3 Z" fill="#E8A838" stroke="#B06A1A" stroke-width="1" stroke-linejoin="round"/><path d="M7 6.9 L9.8 8.1 L9.8 11.2 L7 10 Z" fill="#F8D454"/><path d="M7 6.6 L9.8 5.5 L12.8 6.6 L9.8 7.9 Z" fill="#F2C440"/><path d="M10 8.1 L12.8 6.9 L12.8 10 L10 11.2 Z" fill="#D8922A"/></svg>
<div class="t" style="left:18px;top:3px;color:#000;transform:scaleX(0.9661);transform-origin:0 0;">Fason Hammadde Talep</div>
</div>
<div style="left:437px;top:227px;width:638px;height:17px;overflow:hidden;">
<div class="t" style="left:25.75px;top:3px;color:#000;transform:scaleX(0.9769);transform-origin:100% 0;">75</div>
<div class="t" style="left:41px;top:3px;color:#000;transform:scaleX(0.9626);transform-origin:0 0;">KAVAK - TAHTA</div>
<div class="t" style="left:282.50px;top:3px;color:#000;transform:scaleX(0.9769);transform-origin:100% 0;">6923</div>
<div class="t" style="left:348.44px;top:3px;color:#000;transform:scaleX(0.9931);transform-origin:100% 0;">0,208</div>
</div>
<div style="left:815px;top:227px;width:28px;height:17px;overflow:hidden;">
<div class="t" style="left:3px;top:3px;color:#000;transform:scaleX(0.9912);transform-origin:0 0;">m3</div>
</div>
<div style="left:572px;top:227px;width:111px;height:17px;overflow:hidden;">
<div class="t" style="left:2px;top:3px;color:#000;transform:scaleX(1.0901);transform-origin:0 0;">--- ---</div>
</div>
<div style="left:437px;top:227px;width:638px;height:17px;overflow:hidden;">
<div class="t" style="left:470.44px;top:3px;color:#000;transform:scaleX(0.9931);transform-origin:100% 0;">0,208</div>
<div class="t" style="left:583.44px;top:3px;color:#000;transform:scaleX(0.9931);transform-origin:100% 0;">0,000</div>
</div>
<div style="left:26px;top:244px;width:166px;height:13px;overflow:hidden;">
<div class="t" style="left:35px;top:3px;color:#000;transform:scaleX(0.9334);transform-origin:0 0;">SUNTA HAM EBATLI</div>
</div>
<div style="left:192px;top:244px;width:70px;height:13px;overflow:hidden;">
<svg style="left:3px;top:2px" width="13" height="13" viewBox="0 0 13 13"><defs><linearGradient id="gc" x1="0" y1="0" x2="1" y2="1"><stop offset="0" stop-color="#D2EC8C"/><stop offset="1" stop-color="#86BC3A"/></linearGradient></defs><path d="M1.2 8.3 L3.9 6.5 L6.0 9.0 L12.8 1.0 L12.4 4.4 L6.3 12.7 Z" fill="url(#gc)" stroke="#7FB03A" stroke-width="0.7" stroke-linejoin="round"/></svg>
<div class="t" style="left:20px;top:3px;color:#000;transform:scaleX(0.9521);transform-origin:0 0;">Onaylandı</div>
</div>
<div style="left:264px;top:244px;width:172px;height:13px;overflow:hidden;">
<svg style="left:2px;top:3px;" width="14" height="13" viewBox="0 0 14 13"><path d="M0.5 2.5 L4.8 0.5 L9.5 2.5 L9.5 8.8 L5 10.8 L0.5 8.8 Z" fill="#E8A838" stroke="#B06A1A" stroke-width="1" stroke-linejoin="round"/><path d="M1 2.9 L5 4.6 L5 10.2 L1 8.5 Z" fill="#F8D858"/><path d="M1 2.6 L4.8 1 L9 2.6 L5 4.3 Z" fill="#F4CC48"/><path d="M5.2 4.6 L9 2.9 L9 8.5 L5.2 10.2 Z" fill="#E2A232"/><path d="M6.5 6.5 L9.8 5 L13.3 6.5 L13.3 10.3 L9.8 11.8 L6.5 10.3 Z" fill="#E8A838" stroke="#B06A1A" stroke-width="1" stroke-linejoin="round"/><path d="M7 6.9 L9.8 8.1 L9.8 11.2 L7 10 Z" fill="#F8D454"/><path d="M7 6.6 L9.8 5.5 L12.8 6.6 L9.8 7.9 Z" fill="#F2C440"/><path d="M10 8.1 L12.8 6.9 L12.8 10 L10 11.2 Z" fill="#D8922A"/></svg>
<div class="t" style="left:18px;top:3px;color:#000;transform:scaleX(0.9661);transform-origin:0 0;">Fason Hammadde Talep</div>
</div>
<div style="left:437px;top:244px;width:638px;height:13px;overflow:hidden;">
<div class="t" style="left:25.75px;top:3px;color:#000;transform:scaleX(0.9769);transform-origin:100% 0;">73</div>
<div class="t" style="left:41px;top:3px;color:#000;transform:scaleX(0.9065);transform-origin:0 0;">SUNTA</div>
<div class="t" style="left:282.50px;top:3px;color:#000;transform:scaleX(0.9769);transform-origin:100% 0;">6924</div>
<div class="t" style="left:348.44px;top:3px;color:#000;transform:scaleX(0.9931);transform-origin:100% 0;">1,610</div>
</div>
<div style="left:815px;top:244px;width:28px;height:13px;overflow:hidden;">
<div class="t" style="left:3px;top:3px;color:#000;transform:scaleX(0.9328);transform-origin:0 0;">M2</div>
</div>
<div style="left:572px;top:244px;width:111px;height:13px;overflow:hidden;">
<div class="t" style="left:2px;top:3px;color:#000;transform:scaleX(1.0901);transform-origin:0 0;">--- ---</div>
</div>
<div style="left:437px;top:244px;width:638px;height:13px;overflow:hidden;">
<div class="t" style="left:470.44px;top:3px;color:#000;transform:scaleX(0.9931);transform-origin:100% 0;">1,610</div>
<div class="t" style="left:583.44px;top:3px;color:#000;transform:scaleX(0.9931);transform-origin:100% 0;">0,000</div>
</div>
<div style="left:29px;top:77px;width:9px;height:9px;border:1px solid #7E8AA0;border-radius:2px;background:linear-gradient(#FFFFFF,#D5DCEA)"></div>
<div style="left:32px;top:81px;width:5px;height:1px;background:#2A3650"></div>
<div style="left:40px;top:81px;width:4px;height:1px;border-top:1px dotted #6E8CC8;height:0"></div>
<div style="left:51px;top:91px;width:1px;height:166px;border-left:1px dotted #6E8CC8;width:0"></div>
<div style="left:52px;top:98px;width:8px;height:1px;border-top:1px dotted #6E8CC8;height:0"></div>
<div style="left:52px;top:115px;width:8px;height:1px;border-top:1px dotted #6E8CC8;height:0"></div>
<div style="left:52px;top:132px;width:8px;height:1px;border-top:1px dotted #6E8CC8;height:0"></div>
<div style="left:52px;top:149px;width:8px;height:1px;border-top:1px dotted #6E8CC8;height:0"></div>
<div style="left:52px;top:166px;width:8px;height:1px;border-top:1px dotted #6E8CC8;height:0"></div>
<div style="left:52px;top:183px;width:8px;height:1px;border-top:1px dotted #6E8CC8;height:0"></div>
<div style="left:52px;top:200px;width:8px;height:1px;border-top:1px dotted #6E8CC8;height:0"></div>
<div style="left:52px;top:217px;width:8px;height:1px;border-top:1px dotted #6E8CC8;height:0"></div>
<div style="left:52px;top:234px;width:8px;height:1px;border-top:1px dotted #6E8CC8;height:0"></div>
<div style="left:52px;top:251px;width:8px;height:1px;border-top:1px dotted #6E8CC8;height:0"></div>
<svg style="left:16px;top:95px;" width="8" height="10" viewBox="0 0 8 10"><path d="M1 0.5 L6.5 5 L1 9.5" fill="none" stroke="#5E8FDC" stroke-width="2.2"/></svg>
<div style="left:1074px;top:36px;width:1px;height:221px;background:#FFFFFF"></div>
<div style="left:1075px;top:36px;width:16px;height:221px;background:linear-gradient(90deg,#F3F3F3,#E9E9E9)"></div>
<svg style="left:1078px;top:41px;" width="10" height="6" viewBox="0 0 10 6"><path d="M0 5.5 L4.5 0.5 L9 5.5 Z" fill="#4D5C80"/></svg>
<svg style="left:1078px;top:247px;" width="10" height="6" viewBox="0 0 10 6"><path d="M0 0.5 L4.5 5.5 L9 0.5 Z" fill="#4D5C80"/></svg>
<div style="left:1075px;top:53px;width:14px;height:141px;border:1px solid #5A6C92;border-radius:2px;background:linear-gradient(90deg,#E0E6EE,#C9D3E0 45%,#B8C4D6)"></div>
<div style="left:1079px;top:119px;width:7px;height:1px;background:#4F5E7E"></div>
<div style="left:1079px;top:121px;width:7px;height:1px;background:#4F5E7E"></div>
<div style="left:1079px;top:123px;width:7px;height:1px;background:#4F5E7E"></div>
<div style="left:1079px;top:125px;width:7px;height:1px;background:#4F5E7E"></div>
<div style="left:14px;top:257px;width:274px;height:28px;background:linear-gradient(#E4EEFA 0,#D6E5F8 8px,#BDD7F7 9px,#C6DCF7 100%)"></div>
<div style="left:66px;top:257px;width:40px;height:28px;background:#E2ECF9"></div>
<div style="left:288px;top:257px;width:50px;height:28px;background:#E2ECFA"></div>
<svg style="left:17px;top:263px;" width="19" height="15" viewBox="0 0 19 15"><rect x="0" y="0" width="2" height="15" fill="#1F4A94"/><path d="M2.2 7.5 L10 0 L10 15 Z M10.2 7.5 L18 0 L18 15 Z" fill="#1F4A94"/></svg>
<svg style="left:47px;top:263px;" width="9" height="15" viewBox="0 0 9 15"><path d="M0.4 7.5 L8.4 0 L8.4 15 Z" fill="#1F4A94"/></svg>
<svg style="left:115px;top:263px;" width="9" height="15" viewBox="0 0 9 15"><path d="M0.3 0 L8.5 7.5 L0.3 15 Z" fill="#1F4A94"/></svg>
<svg style="left:135px;top:263px;" width="19" height="15" viewBox="0 0 19 15"><path d="M0.3 0 L8.3 7.5 L0.3 15 Z M8.5 0 L16.5 7.5 L8.5 15 Z" fill="#1F4A94"/><rect x="16.5" y="0" width="2" height="15" fill="#1F4A94"/></svg>
<svg style="left:161px;top:267px;" width="19" height="5" viewBox="0 0 19 5"><rect x="0" y="0.3" width="18.5" height="4.2" fill="#1F4A94"/></svg>
<svg style="left:189px;top:265px;" width="16" height="9" viewBox="0 0 16 9"><path d="M0 8.5 L7.5 0.5 L15.5 8.5 Z" fill="#1F4A94"/></svg>
<svg style="left:213px;top:263px;" width="19" height="15" viewBox="0 0 19 15"><path d="M1.5 6.2 L6.8 11.5 L16.8 1.5" fill="none" stroke="#959595" stroke-width="3.6"/></svg>
<svg style="left:239px;top:263px;" width="19" height="15" viewBox="0 0 19 15"><path d="M2 1.5 L16.5 13.5 M16.5 1.5 L2 13.5" fill="none" stroke="#959595" stroke-width="3.8"/></svg>
<svg style="left:265px;top:263px;" width="19" height="14" viewBox="0 0 19 14"><path d="M2.5 9.5 C2.5 4 5 1.5 8 1.5 C10.5 1.5 12.5 3 14.5 6.5" fill="none" stroke="#1F4A94" stroke-width="3"/><path d="M18.2 3 L18.2 12.4 L8.5 12.4 Z" fill="#1F4A94"/></svg>
<div class="t" style="left:72.22px;top:265px;color:#1B2F6E;transform:scaleX(1.0527);transform-origin:50% 0;">2 / 13</div>
<div style="left:338px;top:257px;width:737px;height:28px;background:linear-gradient(#F4F4F4,#E8E8E8)"></div>
<div style="left:264px;top:257px;width:150px;height:3px;background:#F4F42A"></div>
<svg style="left:343px;top:266px;" width="6" height="10" viewBox="0 0 6 10"><path d="M5.5 0 L0.5 4.75 L5.5 9.5 Z" fill="#4D5C80"/></svg>
<svg style="left:1064px;top:266px;" width="6" height="10" viewBox="0 0 6 10"><path d="M0.5 0 L5.5 4.75 L0.5 9.5 Z" fill="#4D5C80"/></svg>
<div style="left:355px;top:258px;width:440px;height:24px;border:1px solid #5A6C92;border-radius:2px;background:linear-gradient(#E9ECF0 0,#DEE3E9 6px,#C5CFDD 7px,#B6C3D5 65%,#C6D0DE 100%)"></div>
<div style="left:572px;top:267px;width:1px;height:7px;background:#4F5E7E"></div>
<div style="left:574px;top:267px;width:1px;height:7px;background:#4F5E7E"></div>
<div style="left:576px;top:267px;width:1px;height:7px;background:#4F5E7E"></div>
<div style="left:578px;top:267px;width:1px;height:7px;background:#4F5E7E"></div>
<div style="left:1075px;top:257px;width:16px;height:28px;background:#DDE9F9"></div>
<div style="left:13px;top:292px;width:1079px;height:1px;background:#FFFFFF"></div>
<div style="left:13px;top:294px;width:1079px;height:2px;background:linear-gradient(#D6E6FA,#BCD6F6)"></div>
<svg style="left:549px;top:293px;" width="6" height="4" viewBox="0 0 6 4"><path d="M0 0 L6 0 L3 3.5 Z" fill="#4C82CC"/></svg>
<div style="left:13px;top:325px;width:1074px;height:191px;border:1px solid #8DA2C4;background:#F2F6FD"></div>
<div style="left:14px;top:326px;width:1073px;height:190px;border-left:1px solid #fff;border-top:1px solid #fff"></div>
<div style="left:16px;top:304px;width:126px;height:20px;border:1px solid #8DA2C4;border-bottom:none;border-radius:2px 2px 0 0;background:linear-gradient(#EAF0F8 0px,#D9E4F3 9px,#BCD2EF 9px,#C9DCF3 15px,#D3E3F6 20px);box-shadow:inset 0 1px 0 #fff"></div>
<div class="t" style="left:42.16px;top:310px;color:#1B3DA2;transform:scaleX(0.9916);transform-origin:50% 0;">Stoktan Tedarik</div>
<div style="left:273px;top:304px;width:125px;height:20px;border:1px solid #8DA2C4;border-bottom:none;border-radius:2px 2px 0 0;background:linear-gradient(#EAF0F8 0px,#D9E4F3 9px,#BCD2EF 9px,#C9DCF3 15px,#D3E3F6 20px);box-shadow:inset 0 1px 0 #fff"></div>
<div class="t" style="left:301.06px;top:310px;color:#1B3DA2;transform:scaleX(0.9899);transform-origin:50% 0;">Üretim Bilgileri</div>
<div style="left:400px;top:304px;width:125px;height:20px;border:1px solid #8DA2C4;border-bottom:none;border-radius:2px 2px 0 0;background:linear-gradient(#EAF0F8 0px,#D9E4F3 9px,#BCD2EF 9px,#C9DCF3 15px,#D3E3F6 20px);box-shadow:inset 0 1px 0 #fff"></div>
<div class="t" style="left:439.97px;top:310px;color:#1B3DA2;transform:scaleX(0.9753);transform-origin:50% 0;">Maliyetler</div>
<div style="left:141px;top:302px;width:132px;height:27px;background:#F4F42A"></div>
<div style="left:144px;top:303px;width:125px;height:24px;border:1px solid #A8A858;border-bottom:none;border-radius:2px 2px 0 0"></div>
<div class="t" style="left:175.61px;top:309px;color:#000;transform:scaleX(0.9588);transform-origin:50% 0;">Satınalmalar</div>
<div style="left:22px;top:334px;width:890px;height:173px;border:1px solid #B3C8E4;background:#FFFFFF"></div>
<div style="left:23px;top:335px;width:11px;height:18px;background:linear-gradient(#FAFCFF,#E4EFFD 45%,#C1D9F8);border-right:1px solid #72A0DC;border-bottom:1px solid #72A0DC"></div>
<div style="left:35px;top:335px;width:49px;height:18px;background:linear-gradient(#FAFCFF,#E4EFFD 45%,#C1D9F8);border-bottom:1px solid #72A0DC"></div>
<div style="left:84px;top:335px;width:40px;height:18px;background:linear-gradient(#FAFCFF,#E4EFFD 45%,#C1D9F8);border-left:1px solid #72A0DC;border-bottom:1px solid #72A0DC"></div>
<div style="left:125px;top:335px;width:65px;height:18px;background:linear-gradient(#FAFCFF,#E4EFFD 45%,#C1D9F8);border-left:1px solid #72A0DC;border-bottom:1px solid #72A0DC"></div>
<div style="left:191px;top:335px;width:152px;height:18px;background:linear-gradient(#FAFCFF,#E4EFFD 45%,#C1D9F8);border-left:1px solid #72A0DC;border-bottom:1px solid #72A0DC"></div>
<div style="left:344px;top:335px;width:124px;height:18px;background:linear-gradient(#FAFCFF,#E4EFFD 45%,#C1D9F8);border-left:1px solid #72A0DC;border-bottom:1px solid #72A0DC"></div>
<div style="left:469px;top:335px;width:132px;height:18px;background:linear-gradient(#FAFCFF,#E4EFFD 45%,#C1D9F8);border-left:1px solid #72A0DC;border-bottom:1px solid #72A0DC"></div>
<div style="left:602px;top:335px;width:65px;height:18px;background:linear-gradient(#FAFCFF,#E4EFFD 45%,#C1D9F8);border-left:1px solid #72A0DC;border-bottom:1px solid #72A0DC"></div>
<div style="left:668px;top:335px;width:42px;height:18px;background:linear-gradient(#FAFCFF,#E4EFFD 45%,#C1D9F8);border-left:1px solid #72A0DC;border-bottom:1px solid #72A0DC"></div>
<div style="left:711px;top:335px;width:85px;height:18px;background:linear-gradient(#FAFCFF,#E4EFFD 45%,#C1D9F8);border-left:1px solid #72A0DC;border-bottom:1px solid #72A0DC"></div>
<div style="left:797px;top:335px;width:63px;height:18px;background:linear-gradient(#FAFCFF,#E4EFFD 45%,#C1D9F8);border-left:1px solid #72A0DC;border-bottom:1px solid #72A0DC"></div>
<div style="left:861px;top:335px;width:51px;height:18px;background:linear-gradient(#FAFCFF,#E4EFFD 45%,#C1D9F8);border-left:1px solid #72A0DC;border-bottom:1px solid #72A0DC"></div>
<div style="left:35px;top:335px;width:877px;height:18px;overflow:hidden;">
<div class="t" style="left:1px;top:3px;color:#000;transform:scaleX(0.9585);transform-origin:0 0;">M1TedNo</div>
<div class="t" style="left:51px;top:3px;color:#000;transform:scaleX(0.8985);transform-origin:0 0;">Sıra</div>
<div class="t" style="left:92px;top:3px;color:#000;transform:scaleX(0.9698);transform-origin:0 0;">KayıtDurumu</div>
<div class="t" style="left:158px;top:3px;color:#000;transform:scaleX(0.9744);transform-origin:0 0;">Tedarik Şekli</div>
<div class="t" style="left:311px;top:3px;color:#000;transform:scaleX(0.9763);transform-origin:0 0;">Tedarikçi Cari</div>
<div class="t" style="left:436px;top:3px;color:#000;transform:scaleX(0.9452);transform-origin:0 0;">Stok</div>
<div class="t" style="left:569px;top:3px;color:#000;transform:scaleX(0.9871);transform-origin:0 0;">Miktar</div>
<div class="t" style="left:635px;top:3px;color:#000;transform:scaleX(0.9813);transform-origin:0 0;">Birim</div>
<div class="t" style="left:678px;top:3px;color:#000;transform:scaleX(1.0022);transform-origin:0 0;">Takvim</div>
<div class="t" style="left:764px;top:3px;color:#000;transform:scaleX(0.9700);transform-origin:0 0;">Temin Süresi</div>
<div class="t" style="left:828px;top:3px;color:#000;transform:scaleX(0.9907);transform-origin:0 0;">Ref Tarih</div>
</div>
<svg style="left:110px;top:341px;" width="10" height="6" viewBox="0 0 10 6"><path d="M0 5.5 L4.5 0.5 L9.5 5.5 Z" fill="#AFCDF5"/></svg>
<div style="left:23px;top:354px;width:11px;height:17px;background:linear-gradient(#F7FAFE,#D3E3F7);border-right:1px solid #72A0DC"></div>
<svg style="left:24px;top:357px;" width="8" height="10" viewBox="0 0 8 10"><path d="M1 0.5 L6.5 5 L1 9.5" fill="none" stroke="#5E8FDC" stroke-width="2.2"/></svg>
<div style="left:85px;top:353px;width:827px;height:18px;background:#3A6BC9"></div>
<div style="left:35px;top:353px;width:49px;height:18px;background:#fff"></div>
<div style="left:35px;top:354px;width:48px;height:15px;border:1px dotted #000"></div>
<div style="left:85px;top:354px;width:827px;height:1px;border-top:1px dotted #E0A030;height:0"></div>
<div style="left:85px;top:370px;width:827px;height:1px;border-top:1px dotted #E0A030;height:0"></div>
<div style="left:125px;top:354px;width:1px;height:16px;background:#F4F7FC"></div>
<div style="left:191px;top:354px;width:1px;height:16px;background:#F4F7FC"></div>
<div style="left:344px;top:354px;width:1px;height:16px;background:#F4F7FC"></div>
<div style="left:469px;top:354px;width:1px;height:16px;background:#F4F7FC"></div>
<div style="left:602px;top:354px;width:1px;height:16px;background:#F4F7FC"></div>
<div style="left:668px;top:354px;width:1px;height:16px;background:#F4F7FC"></div>
<div style="left:711px;top:354px;width:1px;height:16px;background:#F4F7FC"></div>
<div style="left:797px;top:354px;width:1px;height:16px;background:#F4F7FC"></div>
<div style="left:861px;top:354px;width:1px;height:16px;background:#F4F7FC"></div>
<div style="left:191px;top:354px;width:152px;height:15px;background:#2F5F2C;border-top:1px dotted #E8E83A;border-bottom:1px dotted #E8E83A;border-left:1px solid #D8D840;border-right:1px solid #D8D840"></div>
<div class="t" style="left:58.50px;top:357px;color:#000;transform:scaleX(0.9769);transform-origin:100% 0;">1576</div>
<div class="t" style="left:116.88px;top:357px;color:#fff;transform:scaleX(0.9769);transform-origin:100% 0;">1</div>
<svg style="left:129px;top:357px" width="11" height="11" viewBox="0 0 13 13"><defs><linearGradient id="gc" x1="0" y1="0" x2="1" y2="1"><stop offset="0" stop-color="#D2EC8C"/><stop offset="1" stop-color="#86BC3A"/></linearGradient></defs><path d="M1.2 8.3 L3.9 6.5 L6.0 9.0 L12.8 1.0 L12.4 4.4 L6.3 12.7 Z" fill="url(#gc)" stroke="#7FB03A" stroke-width="0.7" stroke-linejoin="round"/></svg>
<div style="left:126px;top:353px;width:64px;height:18px;overflow:hidden;">
<div class="t" style="left:20px;top:4px;color:#fff;transform:scaleX(0.9521);transform-origin:0 0;">Onaylandı</div>
</div>
<svg style="left:195px;top:357px;" width="14" height="13" viewBox="0 0 14 13"><path d="M0.5 2.5 L4.8 0.5 L9.5 2.5 L9.5 8.8 L5 10.8 L0.5 8.8 Z" fill="#E8A838" stroke="#B06A1A" stroke-width="1" stroke-linejoin="round"/><path d="M1 2.9 L5 4.6 L5 10.2 L1 8.5 Z" fill="#F8D858"/><path d="M1 2.6 L4.8 1 L9 2.6 L5 4.3 Z" fill="#F4CC48"/><path d="M5.2 4.6 L9 2.9 L9 8.5 L5.2 10.2 Z" fill="#E2A232"/><path d="M6.5 6.5 L9.8 5 L13.3 6.5 L13.3 10.3 L9.8 11.8 L6.5 10.3 Z" fill="#E8A838" stroke="#B06A1A" stroke-width="1" stroke-linejoin="round"/><path d="M7 6.9 L9.8 8.1 L9.8 11.2 L7 10 Z" fill="#F8D454"/><path d="M7 6.6 L9.8 5.5 L12.8 6.6 L9.8 7.9 Z" fill="#F2C440"/><path d="M10 8.1 L12.8 6.9 L12.8 10 L10 11.2 Z" fill="#D8922A"/></svg>
<div class="t" style="left:211px;top:357px;color:#F0F03C;transform:scaleX(0.9661);transform-origin:0 0;">Fason Hammadde Talep</div>
<div class="t" style="left:347px;top:357px;color:#fff;transform:scaleX(0.9771);transform-origin:0 0;">Müşteri-3</div>
<div style="left:470px;top:353px;width:132px;height:18px;overflow:hidden;">
<div class="t" style="left:2px;top:4px;color:#fff;transform:scaleX(0.9264);transform-origin:0 0;">M6 MAKAS BAĞLANTI APARATI</div>
</div>
<div class="t" style="left:626.19px;top:357px;color:#fff;transform:scaleX(0.9881);transform-origin:100% 0;">160,000</div>
<div class="t" style="left:671px;top:357px;color:#fff;transform:scaleX(0.9670);transform-origin:0 0;">Adet</div>
<div class="t" style="left:714px;top:357px;color:#fff;transform:scaleX(0.9009);transform-origin:0 0;">STANDART</div>
<div class="t" style="left:816.12px;top:357px;color:#fff;transform:scaleX(1.0225);transform-origin:100% 0;">02:00:00</div>
<div style="left:862px;top:353px;width:50px;height:18px;overflow:hidden;">
<div class="t" style="left:2px;top:4px;color:#fff;transform:scaleX(0.9931);transform-origin:0 0;">31.07.2024</div>
</div>
<div style="left:23px;top:480px;width:268px;height:28px;background:linear-gradient(#E4EEFA 0,#D6E5F8 8px,#BDD7F7 9px,#C6DCF7 100%)"></div>
<div style="left:75px;top:480px;width:34px;height:28px;background:#FFFFFF"></div>
<div style="left:291px;top:480px;width:50px;height:28px;background:#E2ECFA"></div>
<svg style="left:26px;top:486px;" width="19" height="15" viewBox="0 0 19 15"><rect x="0" y="0" width="2" height="15" fill="#949494"/><path d="M2.2 7.5 L10 0 L10 15 Z M10.2 7.5 L18 0 L18 15 Z" fill="#949494"/></svg>
<svg style="left:56px;top:486px;" width="9" height="15" viewBox="0 0 9 15"><path d="M0.4 7.5 L8.4 0 L8.4 15 Z" fill="#949494"/></svg>
<svg style="left:118px;top:486px;" width="9" height="15" viewBox="0 0 9 15"><path d="M0.3 0 L8.5 7.5 L0.3 15 Z" fill="#949494"/></svg>
<svg style="left:138px;top:486px;" width="19" height="15" viewBox="0 0 19 15"><path d="M0.3 0 L8.3 7.5 L0.3 15 Z M8.5 0 L16.5 7.5 L8.5 15 Z" fill="#949494"/><rect x="16.5" y="0" width="2" height="15" fill="#949494"/></svg>
<svg style="left:164px;top:490px;" width="19" height="5" viewBox="0 0 19 5"><rect x="0" y="0.3" width="18.5" height="4.2" fill="#1F4A94"/></svg>
<svg style="left:192px;top:488px;" width="16" height="9" viewBox="0 0 16 9"><path d="M0 8.5 L7.5 0.5 L15.5 8.5 Z" fill="#1F4A94"/></svg>
<svg style="left:216px;top:486px;" width="19" height="15" viewBox="0 0 19 15"><path d="M1.5 6.2 L6.8 11.5 L16.8 1.5" fill="none" stroke="#959595" stroke-width="3.6"/></svg>
<svg style="left:243px;top:486px;" width="19" height="15" viewBox="0 0 19 15"><path d="M2 1.5 L16.5 13.5 M16.5 1.5 L2 13.5" fill="none" stroke="#959595" stroke-width="3.8"/></svg>
<svg style="left:268px;top:486px;" width="19" height="14" viewBox="0 0 19 14"><path d="M2.5 9.5 C2.5 4 5 1.5 8 1.5 C10.5 1.5 12.5 3 14.5 6.5" fill="none" stroke="#1F4A94" stroke-width="3"/><path d="M18.2 3 L18.2 12.4 L8.5 12.4 Z" fill="#1F4A94"/></svg>
<div class="t" style="left:81.28px;top:488px;color:#000;transform:scaleX(1.0743);transform-origin:50% 0;">1 / 1</div>
<div style="left:341px;top:480px;width:572px;height:28px;background:linear-gradient(#F4F4F4,#E8E8E8)"></div>
<svg style="left:346px;top:488px;" width="6" height="10" viewBox="0 0 6 10"><path d="M5.5 0 L0.5 4.75 L5.5 9.5 Z" fill="#4D5C80"/></svg>
<svg style="left:903px;top:488px;" width="6" height="10" viewBox="0 0 6 10"><path d="M0.5 0 L5.5 4.75 L0.5 9.5 Z" fill="#4D5C80"/></svg>
<div style="left:358px;top:481px;width:457px;height:24px;border:1px solid #5A6C92;border-radius:2px;background:linear-gradient(#E9ECF0 0,#DEE3E9 6px,#C5CFDD 7px,#B6C3D5 65%,#C6D0DE 100%)"></div>
<div style="left:585px;top:489px;width:1px;height:7px;background:#4F5E7E"></div>
<div style="left:587px;top:489px;width:1px;height:7px;background:#4F5E7E"></div>
<div style="left:589px;top:489px;width:1px;height:7px;background:#4F5E7E"></div>
<div style="left:591px;top:489px;width:1px;height:7px;background:#4F5E7E"></div>
<div style="left:920px;top:334px;width:158px;height:23px;border:1px solid #7F98BF;border-radius:3px;background:linear-gradient(#EEF3FA 0,#E4ECF7 8px,#D4E1F2 10px,#D9E5F4 20px,#E6EEF8 24px);box-shadow:inset 0 0 0 1px rgba(255,255,255,0.6)"></div>
<div class="t" style="left:949px;top:340px;color:#000;transform:scaleX(0.9890);transform-origin:0 0;">Tedarik Öner</div>
<svg style="left:931px;top:339px;" width="15" height="15" viewBox="0 0 15 15"><defs><radialGradient id="gq" cx="0.4" cy="0.3" r="0.75"><stop offset="0" stop-color="#7FAAE8"/><stop offset="1" stop-color="#2C5CB8"/></radialGradient></defs><circle cx="7" cy="7" r="6.5" fill="#F4F7FC" stroke="#4E62A0" stroke-width="1"/><circle cx="7" cy="7" r="4.9" fill="url(#gq)"/><path d="M4.9 5.4 C4.9 3.4 9.3 3.2 9.3 5.4 C9.3 6.9 7.2 6.8 7.2 8.4" fill="none" stroke="#fff" stroke-width="2"/><rect x="6.1" y="9.1" width="2.2" height="2" fill="#fff"/></svg>
<div style="left:920px;top:359px;width:158px;height:23px;border:1px solid #7F98BF;border-radius:3px;background:linear-gradient(#EEF3FA 0,#E4ECF7 8px,#D4E1F2 10px,#D9E5F4 20px,#E6EEF8 24px);box-shadow:inset 0 0 0 1px rgba(255,255,255,0.6)"></div>
<div class="t" style="left:949px;top:365px;color:#000;transform:scaleX(0.9544);transform-origin:0 0;">Onayla</div>
<svg style="left:931px;top:365px;" width="16" height="13" viewBox="0 0 16 13"><defs><linearGradient id="gc2" x1="0" y1="0" x2="1" y2="1"><stop offset="0" stop-color="#D6EE96"/><stop offset="1" stop-color="#86BC3C"/></linearGradient></defs><path d="M0.6 6.8 L3.3 4.6 L5.8 7.4 L13.3 0.5 L14.8 2.4 L5.8 11.8 Z" fill="url(#gc2)" stroke="#6E9A2E" stroke-width="0.7" stroke-linejoin="round"/></svg>
<div style="left:920px;top:384px;width:158px;height:23px;border:1px solid #7F98BF;border-radius:3px;background:linear-gradient(#EEF3FA 0,#E4ECF7 8px,#D4E1F2 10px,#D9E5F4 20px,#E6EEF8 24px);box-shadow:inset 0 0 0 1px rgba(255,255,255,0.6)"></div>
<div class="t" style="left:949px;top:390px;color:#000;transform:scaleX(0.9494);transform-origin:0 0;">Onayı Kaldır</div>
<svg style="left:931px;top:389px;" width="14" height="14" viewBox="0 0 14 14"><defs><linearGradient id="gx" x1="0" y1="0" x2="0" y2="1"><stop offset="0" stop-color="#F8A898"/><stop offset="1" stop-color="#D84A3A"/></linearGradient></defs><path d="M1 3 L3 1 L6.8 4.8 L10.6 1 L12.6 3 L8.8 6.8 L12.6 10.6 L10.6 12.6 L6.8 8.8 L3 12.6 L1 10.6 L4.8 6.8 Z" fill="url(#gx)" stroke="#C85040" stroke-width="0.6" stroke-linejoin="round"/></svg>
<div style="left:920px;top:409px;width:158px;height:23px;border:1px solid #7F98BF;border-radius:3px;background:linear-gradient(#EEF3FA 0,#E4ECF7 8px,#D4E1F2 10px,#D9E5F4 20px,#E6EEF8 24px);box-shadow:inset 0 0 0 1px rgba(255,255,255,0.6)"></div>
<div class="t" style="left:949px;top:415px;color:#000;transform:scaleX(0.9529);transform-origin:0 0;">Bağlıları Onayla</div>
<svg style="left:931px;top:413px;" width="15" height="18" viewBox="0 0 15 18"><defs><linearGradient id="gt" x1="0" y1="0" x2="0" y2="1"><stop offset="0" stop-color="#FCE6A8"/><stop offset="1" stop-color="#EFAE4A"/></linearGradient></defs><path d="M3.5 4 L3.5 13.6 L7.2 13.6 M3.5 7.6 L7.2 7.6" fill="none" stroke="#4E5878" stroke-width="1"/><rect x="1" y="0.5" width="5.6" height="3.8" fill="url(#gt)" stroke="#CF8A32" stroke-width="1"/><rect x="7.2" y="5.8" width="5.6" height="3.8" fill="url(#gt)" stroke="#CF8A32" stroke-width="1"/><rect x="7.2" y="11.8" width="5.6" height="3.8" fill="url(#gt)" stroke="#CF8A32" stroke-width="1"/></svg>
<div style="left:920px;top:434px;width:158px;height:23px;border:1px solid #7F98BF;border-radius:3px;background:linear-gradient(#EEF3FA 0,#E4ECF7 8px,#D4E1F2 10px,#D9E5F4 20px,#E6EEF8 24px);box-shadow:inset 0 0 0 1px rgba(255,255,255,0.6)"></div>
<div class="t" style="left:949px;top:440px;color:#000;transform:scaleX(0.9501);transform-origin:0 0;">Bağlıların Onayını Kaldır</div>
<svg style="left:931px;top:437px;" width="15" height="17" viewBox="0 0 15 17"><rect x="0.5" y="0.5" width="10.5" height="14.5" fill="#F8F8FC" stroke="#6A7AA8" stroke-width="1"/><path d="M2.5 3.5 H9 M2.5 5.5 H9 M2.5 7.5 H9 M2.5 9.5 H8" stroke="#7A8AB8" stroke-width="1"/><rect x="2" y="11" width="4.5" height="2.5" fill="#5DB82E"/><path d="M7 11 L8.5 9.5 L10.5 11.5 L12.5 9.5 L14 11 L12 13 L14 15 L12.5 16.5 L10.5 14.5 L8.5 16.5 L7 15 L9 13 Z" fill="#E86A5E" stroke="#C0392B" stroke-width="0.6"/></svg>
<div style="left:920px;top:459px;width:158px;height:23px;border:1px solid #7F98BF;border-radius:3px;background:linear-gradient(#EEF3FA 0,#E4ECF7 8px,#D4E1F2 10px,#D9E5F4 20px,#E6EEF8 24px);box-shadow:inset 0 0 0 1px rgba(255,255,255,0.6)"></div>
<div class="t" style="left:949px;top:465px;color:#000;transform:scaleX(0.9585);transform-origin:0 0;">Hepsini Onayla</div>
<svg style="left:931px;top:463px;" width="15" height="18" viewBox="0 0 15 18"><defs><linearGradient id="gt" x1="0" y1="0" x2="0" y2="1"><stop offset="0" stop-color="#FCE6A8"/><stop offset="1" stop-color="#EFAE4A"/></linearGradient></defs><path d="M3.5 4 L3.5 13.6 L7.2 13.6 M3.5 7.6 L7.2 7.6" fill="none" stroke="#4E5878" stroke-width="1"/><rect x="1" y="0.5" width="5.6" height="3.8" fill="url(#gt)" stroke="#CF8A32" stroke-width="1"/><rect x="7.2" y="5.8" width="5.6" height="3.8" fill="url(#gt)" stroke="#CF8A32" stroke-width="1"/><rect x="7.2" y="11.8" width="5.6" height="3.8" fill="url(#gt)" stroke="#CF8A32" stroke-width="1"/></svg>
<div style="left:920px;top:484px;width:158px;height:23px;border:1px solid #7F98BF;border-radius:3px;background:linear-gradient(#EEF3FA 0,#E4ECF7 8px,#D4E1F2 10px,#D9E5F4 20px,#E6EEF8 24px);box-shadow:inset 0 0 0 1px rgba(255,255,255,0.6)"></div>
<div class="t" style="left:949px;top:490px;color:#000;transform:scaleX(0.9536);transform-origin:0 0;">Hepsinin Onayını Kaldır</div>
<svg style="left:931px;top:487px;" width="15" height="17" viewBox="0 0 15 17"><rect x="0.5" y="0.5" width="10.5" height="14.5" fill="#F8F8FC" stroke="#6A7AA8" stroke-width="1"/><path d="M2.5 3.5 H9 M2.5 5.5 H9 M2.5 7.5 H9 M2.5 9.5 H8" stroke="#7A8AB8" stroke-width="1"/><rect x="2" y="11" width="4.5" height="2.5" fill="#5DB82E"/><path d="M7 11 L8.5 9.5 L10.5 11.5 L12.5 9.5 L14 11 L12 13 L14 15 L12.5 16.5 L10.5 14.5 L8.5 16.5 L7 15 L9 13 Z" fill="#E86A5E" stroke="#C0392B" stroke-width="0.6"/></svg>
<svg style="left:724px;top:192px;" width="13" height="20" viewBox="0 0 13 20"><path d="M0.5 0.5 L0.5 16.5 L4.5 12.7 L7.2 18.8 L9.6 17.8 L7 11.8 L12 11.8 Z" fill="#fff" stroke="#000" stroke-width="1" stroke-linejoin="miter"/></svg>
<div style="left:1098px;top:35px;width:1px;height:486px;background:#FFFFFF"></div>
</body></html>
